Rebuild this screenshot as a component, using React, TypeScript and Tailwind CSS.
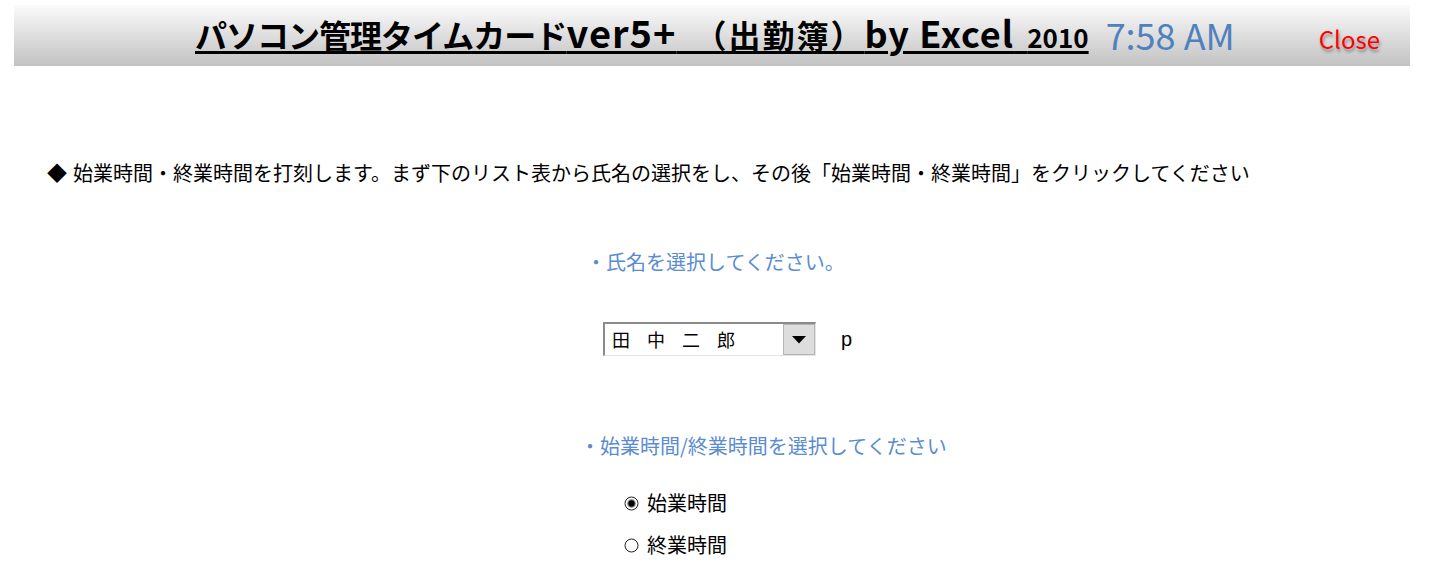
import React from 'react';

const jp = { fontFamily: '"Noto Sans CJK JP", "Noto Sans", sans-serif' };

const Radio: React.FC<{ checked?: boolean; label: string }> = ({ checked, label }) => (
  <label className="flex items-center gap-[8px] leading-[28px]">
    <svg width="15" height="15" viewBox="0 0 15 15" className="shrink-0">
      <circle cx="7.5" cy="7.5" r="6.5" fill="#fff" stroke="#222" strokeWidth="1" />
      {checked && (
        <>
          <circle cx="7.5" cy="7.5" r="4.4" fill="#9a9a9a" />
          <circle cx="7.5" cy="7.5" r="3.2" fill="#000" />
        </>
      )}
    </svg>
    <span className="text-[20px] text-black">{label}</span>
  </label>
);

export default function App() {
  return (
    <div className="w-[1449px] h-[574px] overflow-hidden bg-white" style={jp}>
      {/* header */}
      <div className="ml-[14px] mt-[5px] flex h-[61px] w-[1396px] items-center bg-gradient-to-b from-[#fbfbfb] to-[#c2c2c2]">
        <div className="mb-[8px] ml-[181px] whitespace-nowrap font-bold leading-none text-black underline decoration-[3px] underline-offset-[3px]">
          <span className="text-[32px] tracking-[-1px]">パソコン管理タイムカード</span>
          <span className="text-[38px] tracking-[1px]">ver5+</span>
          <span className="text-[32px] tracking-[2px]">　（出勤簿）</span>
          <span className="text-[36px] tracking-[1px]">by Excel</span>
          <span className="text-[36px] tracking-[5px]"> </span>
          <span className="text-[26px]">2010</span>
        </div>
        <span className="mb-[4px] ml-[17px] text-[36px] leading-none text-[#4f81bd]">7:58 AM</span>
        <span
          className="ml-auto mr-[30px] mt-[6px] text-[24px] leading-none text-[#ff0000]"
          style={{ textShadow: '1px 3px 3px rgba(0,0,0,0.35)' }}
        >
          Close
        </span>
      </div>

      {/* instruction */}
      <div className="mt-[93px] ml-[47px] flex items-center text-[20px] leading-[28px] text-black">
        <span className="mr-[6px]">◆</span>
        <span>始業時間・終業時間を打刻します。まず下のリスト表から氏名の選択をし、その後「始業時間・終業時間」をクリックしてください</span>
      </div>

      {/* name select */}
      <div className="mt-[61px] ml-[586px] text-[20px] leading-[28px] text-[#5b8cd1]">・氏名を選択してください。</div>

      <div className="mt-[46px] ml-[603px] flex items-center">
        <div className="flex h-[34px] w-[213px] items-center border-t-2 border-l-2 border-r border-b border-t-[#8a8a8a] border-l-[#8a8a8a] border-r-[#e4e4e4] border-b-[#e4e4e4] bg-white">
          <span className="ml-[7px] text-[18px] tracking-[-0.5px] text-black">田　中　二　郎</span>
          <div className="ml-auto flex h-full w-[32px] items-center justify-center border border-[#b5b5b5] bg-[#dddddd]">
            <svg width="16" height="9" viewBox="0 0 16 9">
              <polygon points="1,1 15,1 8,8.5" fill="#000" />
            </svg>
          </div>
        </div>
        <span className="ml-[25px] text-[20px] text-black" style={{ fontFamily: '"Liberation Sans", sans-serif' }}>
          p
        </span>
      </div>

      {/* start / end selection */}
      <div className="mt-[76px] ml-[580px] text-[20px] leading-[28px] text-[#5b8cd1]">・始業時間/終業時間を選択してください</div>

      <div className="mt-[29px] ml-[624px] flex flex-col gap-[14px]">
        <Radio checked label="始業時間" />
        <Radio label="終業時間" />
      </div>
    </div>
  );
}
